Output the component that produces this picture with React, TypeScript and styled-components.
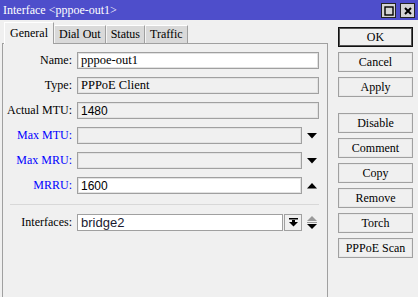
import React from "react";
import styled, { createGlobalStyle } from "styled-components";

const GlobalStyle = createGlobalStyle`
  html, body {
    margin: 0;
    padding: 0;
    background: #f0f0f0;
  }
  body {
    font-family: "Liberation Serif", "Times New Roman", serif;
    font-size: 12px;
    color: #000;
  }
`;

const Window = styled.div`
  width: 418px;
  height: 297px;
  background: #f0f0f0;
  overflow: hidden;
  display: flex;
  flex-direction: column;
`;

const TitleBar = styled.div`
  height: 20px;
  background: #4e4ecb;
  color: #fff;
  display: flex;
  align-items: center;
  justify-content: space-between;
  padding: 0 3px 0 3px;
  font-size: 12px;
`;

const WinButtons = styled.div`
  display: flex;
  gap: 4px;
  margin-top: 1px;
`;

const WinButton = styled.div`
  width: 13px;
  height: 13px;
  background: #d4d4d4;
  border: 1px solid #222;
  display: flex;
  align-items: center;
  justify-content: center;
`;

const Body = styled.div`
  flex: 1;
  display: flex;
`;

const TabArea = styled.div`
  width: 326px;
  margin-left: 2px;
  padding-top: 2px;
  display: flex;
  flex-direction: column;
`;

const TabRow = styled.div`
  display: flex;
  align-items: flex-end;
  height: 21px;
  padding-left: 2px;
  position: relative;
  z-index: 1;
`;

const Tab = styled.div<{ active?: boolean }>`
  height: ${(p) => (p.active ? "22px" : "18px")};
  box-sizing: border-box;
  padding: 0 ${(p) => (p.active ? "5px" : "4px")};
  display: flex;
  align-items: center;
  background: ${(p) => (p.active ? "#f0f0f0" : "#d9d9d9")};
  border-top: 1px solid #fff;
  border-left: 1px solid ${(p) => (p.active ? "#fff" : "#f4f4f4")};
  border-right: 1px solid #a0a0a0;
  margin-bottom: ${(p) => (p.active ? "-1px" : "0")};
  font-size: 12px;
`;

const Panel = styled.div`
  flex: 1;
  border: 1px solid #a0a0a0;
  border-bottom: none;
  padding: 8px 8px 0 0;
  display: flex;
  flex-direction: column;
`;

const FormGrid = styled.div`
  display: grid;
  grid-template-columns: 69px 1fr 12px;
  column-gap: 5px;
  row-gap: 8px;
  align-items: center;
`;

const Label = styled.div<{ blue?: boolean }>`
  text-align: right;
  color: ${(p) => (p.blue ? "#0000ff" : "#000")};
  font-size: 12px;
  white-space: nowrap;
`;

const Field = styled.div<{ editable?: boolean; wide?: boolean }>`
  grid-column: ${(p) => (p.wide ? "2 / 4" : "2 / 3")};
  height: 17px;
  box-sizing: border-box;
  border: 1px solid #a0a0a0;
  box-shadow: inset 0 0 0 1px #e2e2e2;
  background: ${(p) => (p.editable ? "#fff" : "#f0f0f0")};
  padding: 0 3px;
  display: flex;
  align-items: center;
  font-size: 12.5px;
`;

const Sans = styled.span`
  font-family: "Liberation Sans", Arial, sans-serif;
  font-size: 12px;
`;

const Arrow = styled.div`
  display: flex;
  align-items: center;
  justify-content: flex-start;
`;

const Separator = styled.div`
  height: 1px;
  background: #d8d8d8;
  margin: 10px 0 9px 7px;
`;

const ComboCell = styled.div`
  grid-column: 2 / 3;
  display: flex;
  height: 17px;
`;

const ComboInput = styled.div`
  flex: 1;
  box-sizing: border-box;
  border: 1px solid #a0a0a0;
  background: #fff;
  padding: 0 3px;
  display: flex;
  align-items: center;
  font-family: "Liberation Sans", Arial, sans-serif;
  font-size: 13px;
  color: #1a1a30;
`;

const ComboButton = styled.div`
  width: 18px;
  margin-left: 1px;
  box-sizing: border-box;
  border: 1px solid #a0a0a0;
  background: #f0f0f0;
  display: flex;
  align-items: center;
  justify-content: center;
`;

const ButtonColumn = styled.div`
  width: 75px;
  margin-left: 10px;
  padding-top: 7px;
  display: flex;
  flex-direction: column;
`;

const Button = styled.div<{ primary?: boolean; spaced?: boolean }>`
  height: 20px;
  box-sizing: border-box;
  border: 1px solid ${(p) => (p.primary ? "#111" : "#a0a0a0")};
  box-shadow: inset 0 0 0 1px ${(p) => (p.primary ? "#555" : "#e8e8e8")};
  background: #f0f0f0;
  display: flex;
  align-items: center;
  justify-content: center;
  font-size: 12px;
  margin-bottom: ${(p) => (p.spaced ? "16px" : "5px")};
`;

const DownTri = ({ color = "#000" }: { color?: string }) => (
  <svg width="10" height="6" viewBox="0 0 10 6">
    <polygon points="0,0 10,0 5,5.5" fill={color} />
  </svg>
);

const UpTri = ({ color = "#000" }: { color?: string }) => (
  <svg width="10" height="6" viewBox="0 0 10 6">
    <polygon points="0,5.5 10,5.5 5,0" fill={color} />
  </svg>
);

const UpDown = () => (
  <svg width="10" height="14" viewBox="0 0 10 14">
    <polygon points="0,5 10,5 5,0" fill="#9a9a9a" />
    <rect x="0" y="6" width="10" height="1" fill="#9a9a9a" />
    <polygon points="0,8 10,8 5,13" fill="#000" />
  </svg>
);

const DropIcon = () => (
  <svg width="9" height="9" viewBox="0 0 9 9">
    <rect x="0" y="0" width="9" height="1.5" fill="#000" />
    <rect x="3" y="2" width="3" height="3" fill="#000" />
    <polygon points="0,4 9,4 4.5,8.5" fill="#000" />
  </svg>
);

const tabs = ["General", "Dial Out", "Status", "Traffic"];
const buttons = [
  "OK",
  "Cancel",
  "Apply",
  "Disable",
  "Comment",
  "Copy",
  "Remove",
  "Torch",
  "PPPoE Scan",
];

export default function App() {
  return (
    <>
      <GlobalStyle />
      <Window>
        <TitleBar>
          <span>Interface &lt;pppoe-out1&gt;</span>
          <WinButtons>
            <WinButton>
              <svg width="10" height="10" viewBox="0 0 10 10">
                <rect x="1" y="1" width="8" height="8" fill="none" stroke="#000" strokeWidth="1.4" />
              </svg>
            </WinButton>
            <WinButton>
              <svg width="10" height="10" viewBox="0 0 10 10">
                <path d="M2 2 L8 8 M8 2 L2 8" stroke="#000" strokeWidth="2" />
              </svg>
            </WinButton>
          </WinButtons>
        </TitleBar>
        <Body>
          <TabArea>
            <TabRow>
              {tabs.map((t, i) => (
                <Tab key={t} active={i === 0}>
                  {t}
                </Tab>
              ))}
            </TabRow>
            <Panel>
              <FormGrid>
                <Label>Name:</Label>
                <Field editable wide>pppoe-out1</Field>
                <Label>Type:</Label>
                <Field wide>PPPoE Client</Field>
                <Label>Actual MTU:</Label>
                <Field wide>
                  <Sans>1480</Sans>
                </Field>
                <Label blue>Max MTU:</Label>
                <Field />
                <Arrow>
                  <DownTri />
                </Arrow>
                <Label blue>Max MRU:</Label>
                <Field />
                <Arrow>
                  <DownTri />
                </Arrow>
                <Label blue>MRRU:</Label>
                <Field editable>
                  <Sans>1600</Sans>
                </Field>
                <Arrow>
                  <UpTri />
                </Arrow>
              </FormGrid>
              <Separator />
              <FormGrid>
                <Label>Interfaces:</Label>
                <ComboCell>
                  <ComboInput>bridge2</ComboInput>
                  <ComboButton>
                    <DropIcon />
                  </ComboButton>
                </ComboCell>
                <Arrow>
                  <UpDown />
                </Arrow>
              </FormGrid>
            </Panel>
          </TabArea>
          <ButtonColumn>
            {buttons.map((b, i) => (
              <Button key={b} primary={i === 0} spaced={b === "Apply"}>
                {b}
              </Button>
            ))}
          </ButtonColumn>
        </Body>
      </Window>
    </>
  );
}
